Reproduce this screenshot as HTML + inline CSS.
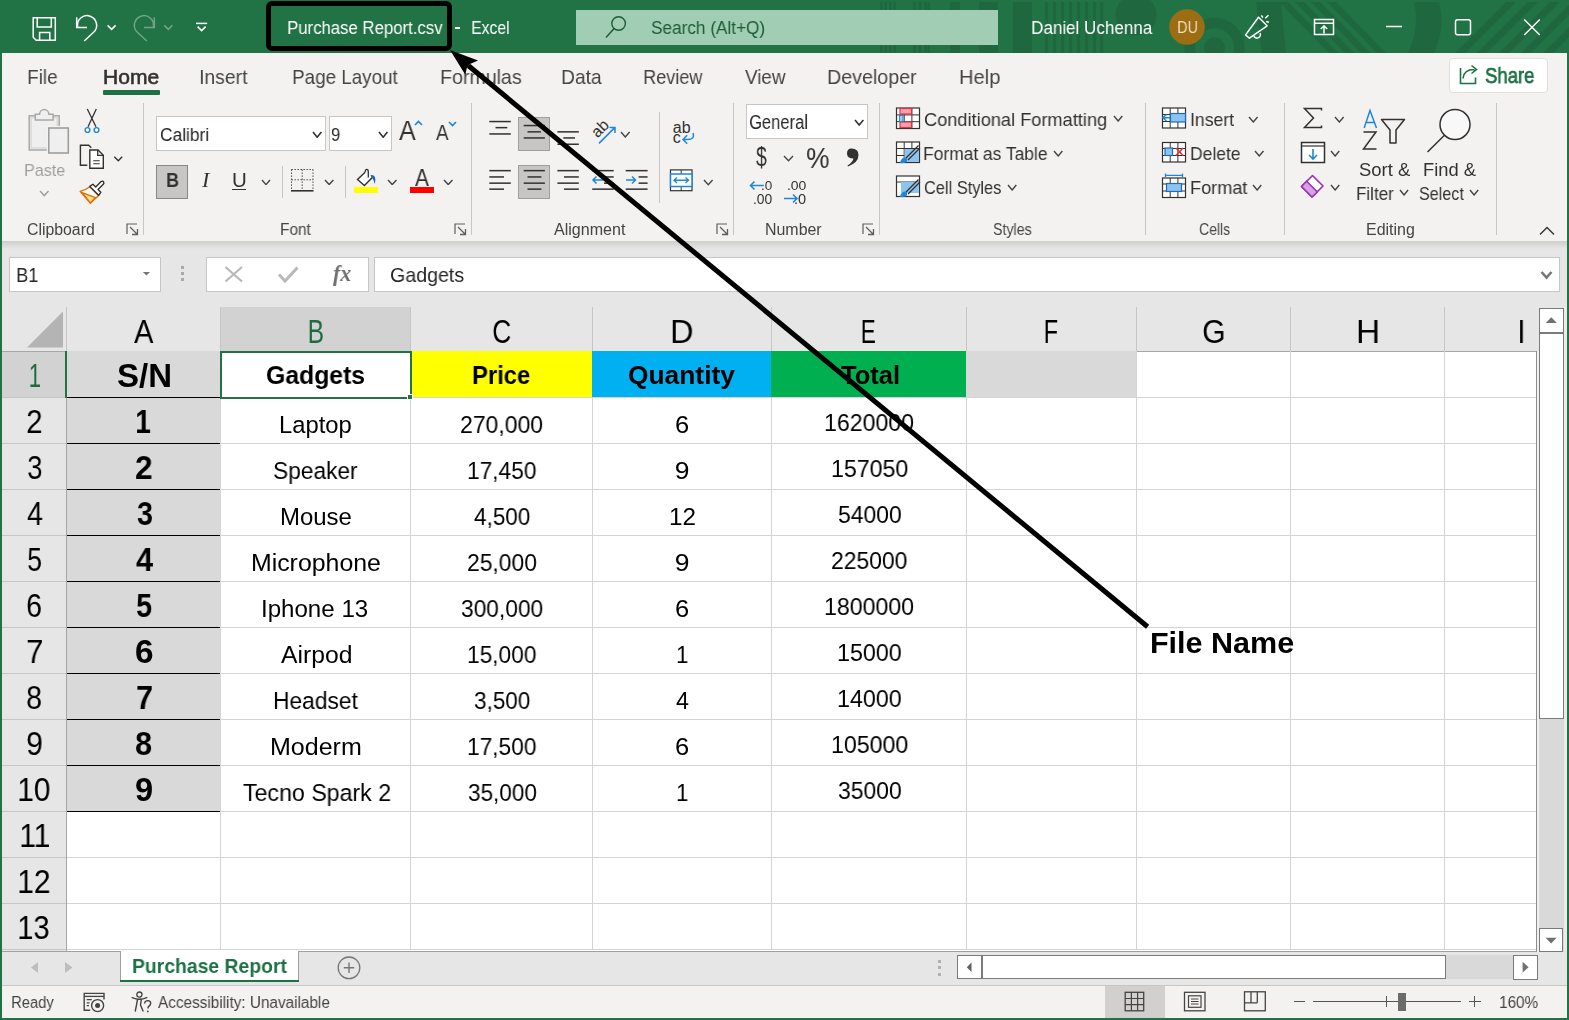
<!DOCTYPE html><html><head><meta charset="utf-8"><style>html,body{margin:0;padding:0;width:1569px;height:1020px;overflow:hidden;background:#217346;}
body{position:relative;font-family:"Liberation Sans",sans-serif;}
.t{position:absolute;white-space:pre;color:#444444;will-change:transform}
.r{position:absolute;display:block}
</style></head><body>
<svg class="r" style="left:0px;top:0px;" width="1569" height="53" viewBox="0 0 1569 53"><g fill="#1e673f"><rect x="880" y="2" width="2.5" height="51"/><rect x="884.5" y="2" width="2.5" height="51"/><rect x="889" y="2" width="2.5" height="51"/><rect x="893.5" y="2" width="2.5" height="51"/><rect x="913" y="2" width="3" height="51"/><rect x="918.5" y="2" width="3" height="51"/><rect x="924" y="2" width="3" height="51"/><rect x="927.5" y="2" width="2.5" height="51"/><rect x="950" y="2" width="10" height="51"/><rect x="979" y="2" width="19" height="51"/><rect x="1013" y="2" width="19" height="51"/><rect x="1045" y="2" width="3.2" height="51"/><rect x="1053" y="2" width="3.2" height="51"/><rect x="1061" y="2" width="3.2" height="51"/><rect x="1069" y="2" width="3.2" height="51"/><rect x="1077" y="2" width="3.2" height="51"/><rect x="1085" y="2" width="3.2" height="51"/><rect x="1093" y="2" width="3.2" height="51"/><rect x="1100" y="2" width="3.2" height="51"/><circle cx="1136" cy="15" r="20.5"/><circle cx="1214.5" cy="47.8" r="24.8" fill="none" stroke="#1e673f" stroke-width="10.5"/><circle cx="1214.5" cy="47.8" r="10.5"/><path d="M1256.4,2 L1280.6,2 L1286,53 L1262,53 Q1258,27 1256.4,2 Z"/><path d="M1279,2 l9,0 l50,51 l-9,0 z"/><path d="M1295,2 l9,0 l50,51 l-9,0 z"/><path d="M1311,2 l9,0 l50,51 l-9,0 z"/><path d="M1327,2 l9,0 l50,51 l-9,0 z"/><path d="M1414,2 L1439,2 Q1446,27 1434,53 L1408,53 Q1420,27 1414,2 z"/><path d="M1455,53 l10,0 l51,-51 l-10,0 z"/><path d="M1477,53 l10,0 l51,-51 l-10,0 z"/><path d="M1499,53 l10,0 l51,-51 l-10,0 z"/><path d="M1521,53 l10,0 l51,-51 l-10,0 z"/><path d="M1543,53 l10,0 l51,-51 l-10,0 z"/></g></svg>
<svg class="r" style="left:0px;top:0px;" width="260" height="53" viewBox="0 0 260 53">
<path d="M33.2,17.7 H55.3 V40.3 H36.2 L33.2,37.3 Z" stroke="#ffffff" stroke-width="1.5" fill="none"/>
<path d="M37.2,17.7 V27 H51.3 V17.7" stroke="#ffffff" stroke-width="1.5" fill="none"/>
<path d="M39.6,40.3 V32.6 H49.8 V40.3" stroke="#ffffff" stroke-width="1.5" fill="none"/>
<path d="M76.7,17.2 V27.5 H87" stroke="#ffffff" stroke-width="1.5" fill="none"/>
<path d="M77.6,27 A9.6,9.6 0 1 1 93.6,32.3 L84.2,41" stroke="#ffffff" stroke-width="1.5" fill="none"/>
<path d="M107.6,25.4 L111.6,29.4 L115.6,25.4" stroke="#ffffff" stroke-width="1.5" fill="none"/>
<g opacity="0.35">
<path d="M154.3,17.2 V27.5 H144" stroke="#ffffff" stroke-width="1.5" fill="none"/>
<path d="M153.4,27 A9.6,9.6 0 1 0 137.4,32.3 L146.8,41" stroke="#ffffff" stroke-width="1.5" fill="none"/>
<path d="M164.3,25.4 L168.3,29.4 L172.3,25.4" stroke="#ffffff" stroke-width="1.5" fill="none"/>
</g>
<path d="M196,23.4 H207.2" stroke="#ffffff" stroke-width="1.5" fill="none"/>
<path d="M197.6,26.6 L201.6,30.6 L205.6,26.6" stroke="#ffffff" stroke-width="1.5" fill="none"/>
</svg>
<div class="r" style="left:455px;top:27.2px;width:5px;height:1.4px;background:#ffffff;"></div>
<div class="r" style="left:576px;top:10px;width:422px;height:35px;background:#a0cdb4;"></div>
<svg class="r" style="left:600px;top:10px;" width="40" height="35" viewBox="0 0 40 35"><circle cx="18.6" cy="13.5" r="6.8" stroke="#1d5c35" stroke-width="1.4" fill="none"/><path d="M14.1,18.5 L6,27.4" stroke="#1d5c35" stroke-width="1.5" fill="none"/></svg>
<svg class="r" style="left:1169px;top:9px;" width="36" height="36" viewBox="0 0 36 36"><circle cx="18" cy="18" r="17.8" fill="#9c6d12"/></svg>
<svg class="r" style="left:1240px;top:10px;" width="320" height="35" viewBox="0 0 320 35">
<path d="M5.6,24.9 L18.5,7.2 L27.1,15.8 L9.4,28.2 Z" stroke="#fff" stroke-width="1.5" fill="none" stroke-linejoin="round"/>
<path d="M13.7,25.3 A3.4,3.4 0 1 0 20,23" stroke="#fff" stroke-width="1.5" fill="none"/>
<path d="M21.4,5.3 L22.8,7.7 M25.2,8.2 L28.5,5.3 M26.2,11.5 L29,12.2" stroke="#fff" stroke-width="1.5" fill="none"/>
<rect x="74.5" y="9.5" width="19" height="15" stroke="#fff" stroke-width="1.5" fill="none"/>
<path d="M74.5,13.2 H93.5 M84,23.5 V15.8 M80.8,19 L84,15.8 L87.2,19" stroke="#fff" stroke-width="1.5" fill="none"/>
<path d="M146,16.5 H162" stroke="#fff" stroke-width="1.5"/>
<rect x="215.5" y="9.7" width="15" height="15" rx="2" stroke="#fff" stroke-width="1.5" fill="none"/>
<path d="M284.2,9.5 L299.8,25 M299.8,9.5 L284.2,25" stroke="#fff" stroke-width="1.5"/>
</svg>
<div class="r" style="left:2px;top:53px;width:1565px;height:188px;background:#f3f2f1;"></div>
<div class="r" style="left:103px;top:90px;width:57px;height:4.6px;background:#1e7145;border-radius:1px;"></div>
<div class="r" style="left:1448.5px;top:57.5px;width:99.5px;height:35.2px;background:#ffffff;box-sizing:border-box;border:1px solid #e1dfdd;border-radius:4px;"></div>
<svg class="r" style="left:1455px;top:62px;" width="30" height="26" viewBox="0 0 30 26"><path d="M5.5,6 V21.5 H20.5 V15.5" stroke="#1e7145" stroke-width="1.6" fill="none"/><path d="M8,16.5 C8.5,10 13,7.5 19.5,7.5 M16.5,3.5 L21.5,7.5 L16.5,11.5" stroke="#1e7145" stroke-width="1.6" fill="none"/></svg>
<div class="r" style="left:143px;top:103px;width:1px;height:132px;background:#c8c6c4;"></div>
<div class="r" style="left:471px;top:103px;width:1px;height:132px;background:#c8c6c4;"></div>
<div class="r" style="left:733px;top:103px;width:1px;height:132px;background:#c8c6c4;"></div>
<div class="r" style="left:879px;top:103px;width:1px;height:132px;background:#c8c6c4;"></div>
<div class="r" style="left:1145px;top:103px;width:1px;height:132px;background:#c8c6c4;"></div>
<div class="r" style="left:1284px;top:103px;width:1px;height:132px;background:#c8c6c4;"></div>
<div class="r" style="left:1496px;top:103px;width:1px;height:132px;background:#c8c6c4;"></div>
<div class="r" style="left:282px;top:166px;width:1px;height:32px;background:#c8c6c4;"></div>
<div class="r" style="left:345px;top:166px;width:1px;height:32px;background:#c8c6c4;"></div>
<div class="r" style="left:659px;top:112px;width:1px;height:91px;background:#c8c6c4;"></div>
<svg class="r" style="left:125.5px;top:222.5px;" width="13" height="13" viewBox="0 0 13 13"><path d="M1,11 V1 H11" stroke="#605e5c" stroke-width="1.2" fill="none"/><path d="M4,4 L11.5,11.5 M6,11.5 H11.5 V6" stroke="#605e5c" stroke-width="1.3" fill="none"/></svg>
<svg class="r" style="left:453.5px;top:222.5px;" width="13" height="13" viewBox="0 0 13 13"><path d="M1,11 V1 H11" stroke="#605e5c" stroke-width="1.2" fill="none"/><path d="M4,4 L11.5,11.5 M6,11.5 H11.5 V6" stroke="#605e5c" stroke-width="1.3" fill="none"/></svg>
<svg class="r" style="left:716px;top:222.5px;" width="13" height="13" viewBox="0 0 13 13"><path d="M1,11 V1 H11" stroke="#605e5c" stroke-width="1.2" fill="none"/><path d="M4,4 L11.5,11.5 M6,11.5 H11.5 V6" stroke="#605e5c" stroke-width="1.3" fill="none"/></svg>
<svg class="r" style="left:862px;top:222.5px;" width="13" height="13" viewBox="0 0 13 13"><path d="M1,11 V1 H11" stroke="#605e5c" stroke-width="1.2" fill="none"/><path d="M4,4 L11.5,11.5 M6,11.5 H11.5 V6" stroke="#605e5c" stroke-width="1.3" fill="none"/></svg>
<svg class="r" style="left:22px;top:104px;" width="52" height="52" viewBox="0 0 52 52">
<rect x="7.2" y="11.8" width="30" height="34.2" fill="#efefef" stroke="#a8a8a8" stroke-width="1.5"/>
<rect x="9.2" y="13.8" width="26" height="30.2" fill="none" stroke="#dadada" stroke-width="1.5"/>
<path d="M13.3,16 V10.2 H17.6 A4.6,4.6 0 0 1 26.8,10.2 H31.1 V16 Z" fill="#efefef" stroke="#a8a8a8" stroke-width="1.5"/>
<rect x="24.8" y="22" width="23.6" height="29.2" fill="#f3f2f1"/>
<rect x="26.8" y="24" width="19.5" height="25" fill="#efefef" stroke="#999999" stroke-width="1.5"/>
</svg>
<svg class="r" style="left:39px;top:190.3px;" width="10.5" height="6.6" viewBox="0 0 10.5 6.6"><path d="M1,1 L5.25,5.6 L9.5,1" stroke="#a19f9d" stroke-width="1.4" fill="none"/></svg>
<svg class="r" style="left:76px;top:104px;" width="50" height="68" viewBox="0 0 50 68">
<path d="M11.3,5 L20,22.7 M20.3,5 L12,22.7" stroke="#323130" stroke-width="1.3" fill="none"/>
<circle cx="11.5" cy="26" r="2.4" stroke="#1e88d8" stroke-width="1.4" fill="#fff"/>
<circle cx="20.5" cy="26" r="2.4" stroke="#1e88d8" stroke-width="1.4" fill="#fff"/>
<path d="M11.3,61.3 H4.4 V41.3 H12.7 L15.3,43.7" stroke="#323130" stroke-width="1.4" fill="none"/>
<path d="M13.8,46 H22 L27.3,51.3 V64.3 H13.8 Z" stroke="#323130" stroke-width="1.4" fill="#ffffff" stroke-linejoin="miter"/>
<path d="M21.7,46 V51.3 H27.3" stroke="#323130" stroke-width="1.3" fill="none"/>
<path d="M17.3,56.8 H23.7 M17.3,59.8 H23.7" stroke="#323130" stroke-width="1.1"/>
<path d="M38.3,52.7 L42.3,56.7 L46.2,52.7" stroke="#323130" stroke-width="1.4" fill="none"/>
</svg>
<svg class="r" style="left:76px;top:176px;" width="32" height="32" viewBox="0 0 32 32">
<path d="M13.8,10.7 Q9,14.5 4.1,15.4 L14.4,27 L22.6,19.5 Z" fill="#ffffff" stroke="#e07000" stroke-width="1.4" stroke-linejoin="round"/>
<path d="M5.6,16.3 L19.5,21.6 L14.4,27 Z" fill="#f8d98a" stroke="#e07000" stroke-width="1.4" stroke-linejoin="round"/>
<path d="M13.8,10.4 L16.9,8.2 L19.7,11 L25.1,5.6 Q26.5,4.5 27.6,6 Q28.3,7.3 27.3,8.3 L22,13.6 L24.8,16.3 L22.6,19.3 Z" fill="#ffffff" stroke="#323130" stroke-width="1.4" stroke-linejoin="round"/>
</svg>
<div class="r" style="left:156px;top:116px;width:170px;height:34.5px;background:#ffffff;box-sizing:border-box;border:1px solid #c8c6c4;"></div>
<div class="r" style="left:328.5px;top:116px;width:63px;height:34.5px;background:#ffffff;box-sizing:border-box;border:1px solid #c8c6c4;"></div>
<svg class="r" style="left:312px;top:130.5px;" width="10.4" height="7.2" viewBox="0 0 10.4 7.2"><path d="M1,1 L5.2,6.2 L9.4,1" stroke="#323130" stroke-width="1.6" fill="none"/></svg>
<svg class="r" style="left:378px;top:130.5px;" width="10.4" height="7.2" viewBox="0 0 10.4 7.2"><path d="M1,1 L5.2,6.2 L9.4,1" stroke="#323130" stroke-width="1.6" fill="none"/></svg>
<svg class="r" style="left:412px;top:118px;" width="12" height="10" viewBox="0 0 12 10"><path d="M3,7 L6.5,3.5 L10,7" stroke="#1e88d8" stroke-width="1.6" fill="none"/></svg>
<svg class="r" style="left:446px;top:118px;" width="12" height="10" viewBox="0 0 12 10"><path d="M3,4 L6.5,7.5 L10,4" stroke="#1e88d8" stroke-width="1.6" fill="none"/></svg>
<div class="r" style="left:156.3px;top:165px;width:31.6px;height:33.7px;background:#c8c6c4;box-sizing:border-box;border:1px solid #8a8886;"></div>
<div class="r" style="left:232px;top:189px;width:14px;height:1.3px;background:#323130;"></div>
<svg class="r" style="left:261px;top:178.8px;" width="10" height="6.6" viewBox="0 0 10 6.6"><path d="M1,1 L5.0,5.6 L9,1" stroke="#444444" stroke-width="1.4" fill="none"/></svg>
<svg class="r" style="left:288px;top:166px;" width="28" height="28" viewBox="0 0 28 28">
<path d="M3.5,3.5 H25 M3.5,3.5 V24 M25,3.5 V24 M14.2,3.5 V24 M3.5,13.8 H25" stroke="#323130" stroke-width="1" stroke-dasharray="1.3,1.7" fill="none"/>
<path d="M3,24.8 H25.5" stroke="#323130" stroke-width="1.6"/>
</svg>
<svg class="r" style="left:324px;top:178.8px;" width="10.4" height="6.6" viewBox="0 0 10.4 6.6"><path d="M1,1 L5.2,5.6 L9.4,1" stroke="#444444" stroke-width="1.4" fill="none"/></svg>
<svg class="r" style="left:350px;top:164px;" width="34" height="32" viewBox="0 0 34 32">
<path d="M15.1,8.3 L7.5,15.4 L14.4,21.6 L22.3,13.5" stroke="#323130" stroke-width="1.4" fill="#ffffff" stroke-linejoin="miter"/>
<path d="M15.1,8.3 Q15.2,5.3 16.8,5.3 Q18.3,5.3 18.3,7.5 V13.6" stroke="#323130" stroke-width="1.3" fill="none"/>
<path d="M20.5,11.2 Q24.8,10.5 25.4,15.5 Q25.3,18 24.4,20 Q24,15.3 21.6,13.5 Z" fill="#1565c0"/>
</svg>
<div class="r" style="left:354px;top:186.7px;width:24px;height:6px;background:#ffff00;"></div>
<svg class="r" style="left:387.3px;top:178.8px;" width="10.5" height="6.6" viewBox="0 0 10.5 6.6"><path d="M1,1 L5.25,5.6 L9.5,1" stroke="#444444" stroke-width="1.4" fill="none"/></svg>
<div class="r" style="left:409.8px;top:186.7px;width:24.2px;height:6px;background:#ff0000;"></div>
<svg class="r" style="left:443px;top:178.8px;" width="10.5" height="6.6" viewBox="0 0 10.5 6.6"><path d="M1,1 L5.25,5.6 L9.5,1" stroke="#444444" stroke-width="1.4" fill="none"/></svg>
<div class="r" style="left:518.2px;top:117.2px;width:31.6px;height:33.6px;background:#c8c6c4;box-sizing:border-box;border:1px solid #a19f9d;"></div>
<div class="r" style="left:518.2px;top:165px;width:31.6px;height:33.6px;background:#c8c6c4;box-sizing:border-box;border:1px solid #a19f9d;"></div>
<svg class="r" style="left:480px;top:0px;" width="240" height="210" viewBox="0 0 240 210"><rect x="9.300000000000011" y="120.8" width="21.5" height="1.5" fill="#323130"/><rect x="15.5" y="126.89999999999999" width="11.800000000000011" height="1.5" fill="#323130"/><rect x="9.300000000000011" y="133.20000000000002" width="21.5" height="1.5" fill="#323130"/><rect x="43.700000000000045" y="124.8" width="21.199999999999932" height="1.5" fill="#323130"/><rect x="47.5" y="131.10000000000002" width="13.399999999999977" height="1.5" fill="#323130"/><rect x="43.700000000000045" y="137.20000000000002" width="21.199999999999932" height="1.5" fill="#323130"/><rect x="77.39999999999998" y="131.10000000000002" width="21.399999999999977" height="1.5" fill="#323130"/><rect x="83.29999999999995" y="137.20000000000002" width="11.700000000000045" height="1.5" fill="#323130"/><rect x="77.39999999999998" y="143.5" width="21.399999999999977" height="1.5" fill="#323130"/><rect x="9.300000000000011" y="169.9" width="21.5" height="1.5" fill="#323130"/><rect x="9.300000000000011" y="176.20000000000002" width="14.699999999999989" height="1.5" fill="#323130"/><rect x="9.300000000000011" y="182.4" width="21.5" height="1.5" fill="#323130"/><rect x="9.300000000000011" y="188.4" width="14.699999999999989" height="1.5" fill="#323130"/><rect x="43.700000000000045" y="169.9" width="21.199999999999932" height="1.5" fill="#323130"/><rect x="47.5" y="176.20000000000002" width="13.899999999999977" height="1.5" fill="#323130"/><rect x="43.700000000000045" y="182.4" width="21.199999999999932" height="1.5" fill="#323130"/><rect x="47.5" y="188.4" width="13.899999999999977" height="1.5" fill="#323130"/><rect x="77.39999999999998" y="169.9" width="21.399999999999977" height="1.5" fill="#323130"/><rect x="84" y="176.20000000000002" width="14.799999999999955" height="1.5" fill="#323130"/><rect x="77.39999999999998" y="182.4" width="21.399999999999977" height="1.5" fill="#323130"/><rect x="84" y="188.4" width="14.799999999999955" height="1.5" fill="#323130"/><rect x="112.20000000000005" y="169.9" width="21.5" height="1.5" fill="#323130"/><rect x="124" y="176.20000000000002" width="9.700000000000045" height="1.5" fill="#323130"/><rect x="124" y="182.4" width="9.700000000000045" height="1.5" fill="#323130"/><rect x="112.20000000000005" y="188.4" width="21.5" height="1.5" fill="#323130"/><rect x="145.70000000000005" y="169.9" width="21.899999999999977" height="1.5" fill="#323130"/><rect x="158.60000000000002" y="176.20000000000002" width="9.0" height="1.5" fill="#323130"/><rect x="158.60000000000002" y="182.4" width="9.0" height="1.5" fill="#323130"/><rect x="145.70000000000005" y="188.4" width="21.899999999999977" height="1.5" fill="#323130"/><path d="M112.5,180 H123 M116.5,176.5 L113,180 L116.5,183.5" stroke="#1e88d8" stroke-width="1.5" fill="none" transform="translate(0,0)"/><path d="M146,180 H155.5 M152,176.5 L155.5,180 L152,183.5" stroke="#1e88d8" stroke-width="1.5" fill="none"/><text x="0" y="0" font-family="Liberation Sans" font-size="16" fill="#323130" transform="translate(117.5,138.5) rotate(-45)">ab</text><path d="M119,143.4 L135,127.4 M129.5,127.4 H135 V133" stroke="#1e88d8" stroke-width="1.5" fill="none"/><text x="192.8" y="132.6" font-family="Liberation Sans" font-size="16" fill="#323130">ab</text><text x="192.8" y="143.4" font-family="Liberation Sans" font-size="16" fill="#323130">c</text><path d="M213,133 Q215.2,139.5 207.4,139.5 H203.2 M207.2,135.3 L203,139.5 L207.2,143.8" stroke="#1e88d8" stroke-width="1.5" fill="none"/><rect x="190.5" y="169.9" width="21.5" height="20.8" stroke="#323130" stroke-width="1.2" fill="#fff"/><path d="M201.2,170 V191" stroke="#323130" stroke-width="1"/><rect x="190.5" y="174" width="21.5" height="12.5" stroke="#1e88d8" stroke-width="1.5" fill="#fff"/><path d="M194,180.2 H208.5 M197,177.5 L194,180.2 L197,183 M205.5,177.5 L208.5,180.2 L205.5,183" stroke="#1e88d8" stroke-width="1.4" fill="none"/></svg>
<svg class="r" style="left:620px;top:131px;" width="10.6" height="7" viewBox="0 0 10.6 7"><path d="M1,1 L5.3,6 L9.6,1" stroke="#444444" stroke-width="1.4" fill="none"/></svg>
<svg class="r" style="left:703px;top:179px;" width="10.6" height="6.8" viewBox="0 0 10.6 6.8"><path d="M1,1 L5.3,5.8 L9.6,1" stroke="#444444" stroke-width="1.4" fill="none"/></svg>
<div class="r" style="left:746.2px;top:104.4px;width:121.8px;height:34.4px;background:#ffffff;box-sizing:border-box;border:1px solid #c8c6c4;"></div>
<svg class="r" style="left:854px;top:119px;" width="10.4" height="7" viewBox="0 0 10.4 7"><path d="M1,1 L5.2,6 L9.4,1" stroke="#323130" stroke-width="1.6" fill="none"/></svg>
<svg class="r" style="left:783px;top:155px;" width="11" height="6.7" viewBox="0 0 11 6.7"><path d="M1,1 L5.5,5.7 L10,1" stroke="#444444" stroke-width="1.4" fill="none"/></svg>
<svg class="r" style="left:844px;top:145px;" width="18" height="25" viewBox="0 0 18 25"><path d="M7.5,3.5 Q14.5,3.5 14.5,10 Q14.5,17.5 4,21.5 L3.5,20.5 Q8.5,17.5 9.5,13.5 Q3,13.5 3,8.5 Q3,3.5 7.5,3.5 Z" fill="#323130"/></svg>
<svg class="r" style="left:745px;top:175px;" width="60" height="35" viewBox="0 0 60 35"><path d="M5.5,10.5 H18.8 M9.5,6.5 L5.5,10.5 L9.5,14.5" stroke="#1e88d8" stroke-width="1.6" fill="none"/><path d="M39,23.5 H52 M48,19.5 L52,23.5 L48,27.5" stroke="#1e88d8" stroke-width="1.6" fill="none"/></svg>
<svg class="r" style="left:894px;top:105px;" width="30" height="95" viewBox="0 0 30 95">
<rect x="2.5" y="3" width="23" height="20.5" fill="#fff" stroke="#323130" stroke-width="1.2"/>
<path d="M2.5,9.9 H25.5 M2.5,16.7 H25.5 M10.2,3 V23.5 M17.9,3 V23.5" stroke="#323130" stroke-width="1"/>
<rect x="6" y="3.5" width="11.5" height="5.5" fill="#f4a3b0" stroke="#e8323c" stroke-width="1.2"/>
<rect x="6" y="17" width="11.5" height="5.5" fill="#f4a3b0" stroke="#e8323c" stroke-width="1.2"/>
<rect x="5.5" y="10.5" width="3.5" height="6" fill="#9fd0f3" stroke="#1e88d8" stroke-width="1"/>
<rect x="2.5" y="37" width="23" height="20.5" fill="#fff" stroke="#323130" stroke-width="1.2"/>
<path d="M2.5,43.5 H25.5 M2.5,50.5 H25.5 M10.2,37 V57.5 M17.9,37 V57.5" stroke="#323130" stroke-width="1"/>
<path d="M10.5,44 H25 V57 H10.5 Z" fill="#8cc3ef"/>
<path d="M24.5,40.5 L12,53 M26,43 L14,55" stroke="#323130" stroke-width="1.3"/>
<path d="M6,58 Q7,52 12,52.5 Q14,54.5 12.5,57 Q10,58.5 6,58 Z" fill="#1e88d8"/>
<rect x="2.5" y="71" width="23" height="20.5" fill="#fff" stroke="#323130" stroke-width="1.2"/>
<path d="M2.5,77 H25.5" stroke="#323130" stroke-width="1"/>
<path d="M7,77 H25 V88 L7,88 Z" fill="#8cc3ef"/>
<path d="M24.5,74.5 L12,87 M26,77 L14,89" stroke="#323130" stroke-width="1.3"/>
<path d="M6,92 Q7,86 12,86.5 Q14,88.5 12.5,91 Q10,92.5 6,92 Z" fill="#1e88d8"/>
</svg>
<svg class="r" style="left:1113px;top:115px;" width="10.3" height="7" viewBox="0 0 10.3 7"><path d="M1,1 L5.15,6 L9.3,1" stroke="#444444" stroke-width="1.4" fill="none"/></svg>
<svg class="r" style="left:1053px;top:149.5px;" width="10.4" height="7" viewBox="0 0 10.4 7"><path d="M1,1 L5.2,6 L9.4,1" stroke="#444444" stroke-width="1.4" fill="none"/></svg>
<svg class="r" style="left:1007px;top:183.5px;" width="10.3" height="7" viewBox="0 0 10.3 7"><path d="M1,1 L5.15,6 L9.3,1" stroke="#444444" stroke-width="1.4" fill="none"/></svg>
<svg class="r" style="left:1160px;top:105px;" width="30" height="95" viewBox="0 0 30 95">
<rect x="2.5" y="3" width="23" height="20" fill="#fff" stroke="#323130" stroke-width="1.2"/>
<path d="M2.5,9.5 H25.5 M2.5,16.5 H25.5 M10.2,3 V23 M17.9,3 V23" stroke="#323130" stroke-width="1"/>
<rect x="10.5" y="8.5" width="15" height="8.5" fill="#8cc3ef" stroke="#1e6bb8" stroke-width="1.2"/>
<path d="M3,12.8 H10 M6.5,9.5 L3,12.8 L6.5,16" stroke="#1e88d8" stroke-width="1.5" fill="none"/>
<rect x="2.5" y="37.5" width="23" height="19.5" fill="#fff" stroke="#323130" stroke-width="1.2"/>
<path d="M2.5,43.5 H25.5 M2.5,50.5 H25.5 M10.2,37.5 V57 M17.9,37.5 V57" stroke="#323130" stroke-width="1"/>
<rect x="5" y="43" width="7.5" height="7.5" fill="#8cc3ef" stroke="#1e6bb8" stroke-width="1.2"/>
<path d="M16,43 L23,50.5 M23,43 L16,50.5" stroke="#e8323c" stroke-width="1.6"/>
<rect x="2.5" y="73" width="23" height="19.5" fill="#fff" stroke="#323130" stroke-width="1.2"/>
<path d="M2.5,79 H25.5 M2.5,86 H25.5 M10.2,73 V92.5 M17.9,73 V92.5" stroke="#323130" stroke-width="1"/>
<rect x="6.5" y="78.5" width="15" height="8" fill="#8cc3ef" stroke="#1e6bb8" stroke-width="1.2"/>
<path d="M5.5,70.3 H22.5 M5.5,68.5 V72 M22.5,68.5 V72" stroke="#1e88d8" stroke-width="1.3"/>
</svg>
<svg class="r" style="left:1248px;top:116px;" width="10.6" height="7" viewBox="0 0 10.6 7"><path d="M1,1 L5.3,6 L9.6,1" stroke="#444444" stroke-width="1.4" fill="none"/></svg>
<svg class="r" style="left:1254px;top:150px;" width="10.5" height="7" viewBox="0 0 10.5 7"><path d="M1,1 L5.25,6 L9.5,1" stroke="#444444" stroke-width="1.4" fill="none"/></svg>
<svg class="r" style="left:1252px;top:184px;" width="10.3" height="7" viewBox="0 0 10.3 7"><path d="M1,1 L5.15,6 L9.3,1" stroke="#444444" stroke-width="1.4" fill="none"/></svg>
<svg class="r" style="left:1298px;top:104px;" width="32" height="96" viewBox="0 0 32 96">
<path d="M23.5,6.5 V4.5 H6.5 L15.5,14 L6.5,23.5 H23.5 V21.5" stroke="#323130" stroke-width="1.5" fill="none"/>
<rect x="3.5" y="38.5" width="23" height="20" fill="#fff" stroke="#323130" stroke-width="1.5"/>
<path d="M3.5,42 H26.5" stroke="#323130" stroke-width="1.2"/>
<path d="M15,45 V55 M11,51 L15,55 L19,51" stroke="#1e88d8" stroke-width="1.6" fill="none"/>
<path d="M14.5,71.5 L25,82 L14,93 L3.5,82.5 Z" fill="#fff" stroke="#9b30b5" stroke-width="1.6" stroke-linejoin="round"/>
<path d="M8.6,77.2 L19.4,88 L14,93 L3.5,82.5 Z" fill="#d9a0e4" stroke="#9b30b5" stroke-width="1.6" stroke-linejoin="round"/>
</svg>
<svg class="r" style="left:1334px;top:116px;" width="10.7" height="7" viewBox="0 0 10.7 7"><path d="M1,1 L5.35,6 L9.7,1" stroke="#444444" stroke-width="1.4" fill="none"/></svg>
<svg class="r" style="left:1330px;top:150px;" width="10.3" height="7" viewBox="0 0 10.3 7"><path d="M1,1 L5.15,6 L9.3,1" stroke="#444444" stroke-width="1.4" fill="none"/></svg>
<svg class="r" style="left:1330px;top:184px;" width="10.3" height="7" viewBox="0 0 10.3 7"><path d="M1,1 L5.15,6 L9.3,1" stroke="#444444" stroke-width="1.4" fill="none"/></svg>
<svg class="r" style="left:1355px;top:104px;" width="120" height="55" viewBox="0 0 120 55">
<path d="M9.2,24 L15,6.5 L21.5,24 M11,18.5 H19.8" stroke="#1e88d8" stroke-width="1.5" fill="none"/>
<path d="M8.5,28 H21 L8.5,45 H21.5" stroke="#323130" stroke-width="1.5" fill="none"/>
<path d="M26.5,15.5 H49.5 L41,26 V39 H35 V26 Z" stroke="#323130" stroke-width="1.5" fill="#f3f2f1" stroke-linejoin="round"/>
<circle cx="100" cy="20.5" r="15" stroke="#323130" stroke-width="1.5" fill="#f8f8f8"/>
<path d="M89.2,31.5 L72.5,48" stroke="#323130" stroke-width="1.5"/>
</svg>
<svg class="r" style="left:1399.3px;top:189.3px;" width="10.1" height="7" viewBox="0 0 10.1 7"><path d="M1,1 L5.05,6 L9.1,1" stroke="#444444" stroke-width="1.4" fill="none"/></svg>
<svg class="r" style="left:1469px;top:189.3px;" width="10.2" height="7" viewBox="0 0 10.2 7"><path d="M1,1 L5.1,6 L9.2,1" stroke="#444444" stroke-width="1.4" fill="none"/></svg>
<svg class="r" style="left:1538px;top:225px;" width="18" height="12" viewBox="0 0 18 12"><path d="M2,9.5 L9,2.5 L16,9.5" stroke="#323130" stroke-width="1.4" fill="none"/></svg>
<div class="r" style="left:2px;top:241px;width:1565px;height:66px;background:#e6e6e6;"></div>
<div class="r" style="left:2px;top:241px;width:1565px;height:8px;background:linear-gradient(#cfcecd,#e6e6e6);"></div>
<div class="r" style="left:9.4px;top:257px;width:151.3px;height:34.5px;background:#ffffff;box-sizing:border-box;border:1px solid #c6c6c6;"></div>
<svg class="r" style="left:140px;top:270px;" width="14" height="8" viewBox="0 0 14 8"><path d="M2.8,2 H10 L6.4,5.6 Z" fill="#767676"/></svg>
<div class="r" style="left:181px;top:266px;width:3px;height:3px;background:#a8a8a8;"></div>
<div class="r" style="left:181px;top:272px;width:3px;height:3px;background:#a8a8a8;"></div>
<div class="r" style="left:181px;top:278px;width:3px;height:3px;background:#a8a8a8;"></div>
<div class="r" style="left:206px;top:257px;width:163.4px;height:34.5px;background:#ffffff;box-sizing:border-box;border:1px solid #c6c6c6;"></div>
<svg class="r" style="left:220px;top:262px;" width="140" height="26" viewBox="0 0 140 26">
<path d="M5.5,5 L22,19.5 M22,5 L5.5,19.5" stroke="#b8b8b8" stroke-width="2.2"/>
<path d="M59,12.5 L65,19 L77.5,5.5" stroke="#b8b8b8" stroke-width="3" fill="none"/>
</svg>
<div class="r" style="left:374.4px;top:257px;width:1185.6px;height:34.5px;background:#ffffff;box-sizing:border-box;border:1px solid #c6c6c6;"></div>
<svg class="r" style="left:1538px;top:268px;" width="18" height="14" viewBox="0 0 18 14"><path d="M3.5,4 L8.5,9.5 L13.5,4" stroke="#767676" stroke-width="2.6" fill="none"/></svg>
<div class="r" style="left:2px;top:307px;width:1535px;height:44px;background:#e6e6e6;"></div>
<div class="r" style="left:2px;top:351px;width:64px;height:599px;background:#e6e6e6;"></div>
<div class="r" style="left:67px;top:351px;width:1470px;height:599px;background:#ffffff;"></div>
<div class="r" style="left:221px;top:307px;width:189px;height:44px;background:#d2d2d2;"></div>
<div class="r" style="left:2px;top:352px;width:64px;height:45px;background:#d2d2d2;"></div>
<svg class="r" style="left:2px;top:307px;" width="64" height="44" viewBox="0 0 64 44"><path d="M61,4.5 V40.5 H25 Z" fill="#b4b4b4"/></svg>
<div class="r" style="left:220px;top:307px;width:1px;height:44px;background:#c6c6c6;"></div>
<div class="r" style="left:410px;top:307px;width:1px;height:44px;background:#c6c6c6;"></div>
<div class="r" style="left:592px;top:307px;width:1px;height:44px;background:#c6c6c6;"></div>
<div class="r" style="left:771px;top:307px;width:1px;height:44px;background:#c6c6c6;"></div>
<div class="r" style="left:966px;top:307px;width:1px;height:44px;background:#c6c6c6;"></div>
<div class="r" style="left:1136px;top:307px;width:1px;height:44px;background:#c6c6c6;"></div>
<div class="r" style="left:1290px;top:307px;width:1px;height:44px;background:#c6c6c6;"></div>
<div class="r" style="left:1444px;top:307px;width:1px;height:44px;background:#c6c6c6;"></div>
<div class="r" style="left:66px;top:307px;width:1px;height:44px;background:#c6c6c6;"></div>
<div class="r" style="left:2px;top:350.5px;width:1535px;height:1px;background:#a6a6a6;"></div>
<div class="r" style="left:2px;top:397px;width:64px;height:1px;background:#c6c6c6;"></div>
<div class="r" style="left:2px;top:443px;width:64px;height:1px;background:#c6c6c6;"></div>
<div class="r" style="left:2px;top:489px;width:64px;height:1px;background:#c6c6c6;"></div>
<div class="r" style="left:2px;top:535px;width:64px;height:1px;background:#c6c6c6;"></div>
<div class="r" style="left:2px;top:581px;width:64px;height:1px;background:#c6c6c6;"></div>
<div class="r" style="left:2px;top:627px;width:64px;height:1px;background:#c6c6c6;"></div>
<div class="r" style="left:2px;top:673px;width:64px;height:1px;background:#c6c6c6;"></div>
<div class="r" style="left:2px;top:719px;width:64px;height:1px;background:#c6c6c6;"></div>
<div class="r" style="left:2px;top:765px;width:64px;height:1px;background:#c6c6c6;"></div>
<div class="r" style="left:2px;top:811px;width:64px;height:1px;background:#c6c6c6;"></div>
<div class="r" style="left:2px;top:857px;width:64px;height:1px;background:#c6c6c6;"></div>
<div class="r" style="left:2px;top:903px;width:64px;height:1px;background:#c6c6c6;"></div>
<div class="r" style="left:2px;top:949px;width:64px;height:1px;background:#c6c6c6;"></div>
<div class="r" style="left:66px;top:351px;width:1px;height:599px;background:#a6a6a6;"></div>
<div class="r" style="left:67px;top:397px;width:1470px;height:1px;background:#d4d4d4;"></div>
<div class="r" style="left:67px;top:443px;width:1470px;height:1px;background:#d4d4d4;"></div>
<div class="r" style="left:67px;top:489px;width:1470px;height:1px;background:#d4d4d4;"></div>
<div class="r" style="left:67px;top:535px;width:1470px;height:1px;background:#d4d4d4;"></div>
<div class="r" style="left:67px;top:581px;width:1470px;height:1px;background:#d4d4d4;"></div>
<div class="r" style="left:67px;top:627px;width:1470px;height:1px;background:#d4d4d4;"></div>
<div class="r" style="left:67px;top:673px;width:1470px;height:1px;background:#d4d4d4;"></div>
<div class="r" style="left:67px;top:719px;width:1470px;height:1px;background:#d4d4d4;"></div>
<div class="r" style="left:67px;top:765px;width:1470px;height:1px;background:#d4d4d4;"></div>
<div class="r" style="left:67px;top:811px;width:1470px;height:1px;background:#d4d4d4;"></div>
<div class="r" style="left:67px;top:857px;width:1470px;height:1px;background:#d4d4d4;"></div>
<div class="r" style="left:67px;top:903px;width:1470px;height:1px;background:#d4d4d4;"></div>
<div class="r" style="left:220px;top:351px;width:1px;height:599px;background:#d4d4d4;"></div>
<div class="r" style="left:410px;top:351px;width:1px;height:599px;background:#d4d4d4;"></div>
<div class="r" style="left:592px;top:351px;width:1px;height:599px;background:#d4d4d4;"></div>
<div class="r" style="left:771px;top:351px;width:1px;height:599px;background:#d4d4d4;"></div>
<div class="r" style="left:966px;top:351px;width:1px;height:599px;background:#d4d4d4;"></div>
<div class="r" style="left:1136px;top:351px;width:1px;height:599px;background:#d4d4d4;"></div>
<div class="r" style="left:1290px;top:351px;width:1px;height:599px;background:#d4d4d4;"></div>
<div class="r" style="left:1444px;top:351px;width:1px;height:599px;background:#d4d4d4;"></div>
<div class="r" style="left:67px;top:351px;width:153px;height:460px;background:#d9d9d9;"></div>
<div class="r" style="left:67px;top:396.5px;width:153px;height:1.5px;background:#000000;"></div>
<div class="r" style="left:67px;top:442.5px;width:153px;height:1.5px;background:#000000;"></div>
<div class="r" style="left:67px;top:488.5px;width:153px;height:1.5px;background:#000000;"></div>
<div class="r" style="left:67px;top:534.5px;width:153px;height:1.5px;background:#000000;"></div>
<div class="r" style="left:67px;top:580.5px;width:153px;height:1.5px;background:#000000;"></div>
<div class="r" style="left:67px;top:626.5px;width:153px;height:1.5px;background:#000000;"></div>
<div class="r" style="left:67px;top:672.5px;width:153px;height:1.5px;background:#000000;"></div>
<div class="r" style="left:67px;top:718.5px;width:153px;height:1.5px;background:#000000;"></div>
<div class="r" style="left:67px;top:764.5px;width:153px;height:1.5px;background:#000000;"></div>
<div class="r" style="left:67px;top:810.5px;width:153px;height:1.5px;background:#000000;"></div>
<div class="r" style="left:410px;top:351px;width:182px;height:46px;background:#ffff00;"></div>
<div class="r" style="left:592px;top:351px;width:179px;height:46px;background:#00b0f0;"></div>
<div class="r" style="left:771px;top:351px;width:195px;height:46px;background:#00b050;"></div>
<div class="r" style="left:966px;top:351px;width:170px;height:46px;background:#d9d9d9;"></div>
<div class="r" style="left:219.5px;top:350.5px;width:192px;height:48px;box-sizing:border-box;border:2px solid #217346;"></div>
<div class="r" style="left:65px;top:351px;width:2px;height:47px;background:#217346;"></div>
<div class="r" style="left:407px;top:394.2px;width:6px;height:6px;background:#217346;box-sizing:border-box;border:1px solid #fff;"></div>
<div class="r" style="left:1536px;top:351px;width:1px;height:599px;background:#8c8c8c;"></div>
<div class="r" style="left:1537px;top:307px;width:30px;height:643px;background:#e6e6e6;"></div>
<div class="r" style="left:1537px;top:351px;width:2px;height:599px;background:#f0f0f0;"></div>
<div class="r" style="left:1539px;top:308px;width:25px;height:642px;background:#d9d9d9;"></div>
<div class="r" style="left:1564px;top:307px;width:3px;height:643px;background:#ebebeb;"></div>
<div class="r" style="left:1539px;top:308px;width:24.6px;height:24.6px;background:#ffffff;box-sizing:border-box;border:1px solid #7a7a7a;"></div>
<svg class="r" style="left:1539px;top:308px;" width="25" height="25" viewBox="0 0 25 25"><path d="M6.8,15 H17.8 L12.3,9.2 Z" fill="#707070"/></svg>
<div class="r" style="left:1539px;top:333px;width:25px;height:386px;background:#ffffff;box-sizing:border-box;border:1px solid #7a7a7a;"></div>
<div class="r" style="left:2px;top:950px;width:1565px;height:35px;background:#e6e6e6;"></div>
<div class="r" style="left:67px;top:949px;width:1470px;height:1px;background:#d4d4d4;"></div>
<div class="r" style="left:2px;top:949px;width:64px;height:1px;background:#c6c6c6;"></div>
<div class="r" style="left:66px;top:949px;width:1px;height:2px;background:#a6a6a6;"></div>
<div class="r" style="left:2px;top:950px;width:64px;height:1.5px;background:#e6e6e6;"></div>
<div class="r" style="left:67px;top:950px;width:1470px;height:1.5px;background:#ffffff;"></div>
<div class="r" style="left:2px;top:951.3px;width:1535px;height:1px;background:#a0a0a0;"></div>
<div class="r" style="left:1536px;top:949px;width:1px;height:3px;background:#8c8c8c;"></div>
<div class="r" style="left:1537px;top:949px;width:2px;height:3px;background:#f0f0f0;"></div>
<div class="r" style="left:1539px;top:949px;width:25px;height:3px;background:#d9d9d9;"></div>
<div class="r" style="left:1539.3px;top:928.2px;width:24.2px;height:24.3px;background:#ffffff;box-sizing:border-box;border:1px solid #7a7a7a;"></div>
<svg class="r" style="left:1539.3px;top:928.2px;" width="25" height="25" viewBox="0 0 25 25"><path d="M6.6,9.8 H17.6 L12.1,15.6 Z" fill="#707070"/></svg>
<svg class="r" style="left:25px;top:958px;" width="55" height="20" viewBox="0 0 55 20"><path d="M13,4 L6,9.5 L13,15 Z" fill="#bdbdbd"/><path d="M40,4 L47.5,9.5 L40,15 Z" fill="#bdbdbd"/></svg>
<div class="r" style="left:120px;top:951.3px;width:179px;height:30.5px;background:#ffffff;box-sizing:border-box;border-left:1px solid #a0a0a0;border-right:1px solid #a0a0a0;"></div>
<div class="r" style="left:120px;top:979.8px;width:179px;height:2.2px;background:#1e7145;"></div>
<svg class="r" style="left:335px;top:955px;" width="28" height="26" viewBox="0 0 28 26"><circle cx="14" cy="12.8" r="10.8" stroke="#767676" stroke-width="1.3" fill="none"/><path d="M14,7.5 V18 M8.8,12.8 H19.2" stroke="#767676" stroke-width="1.4"/></svg>
<div class="r" style="left:937.5px;top:959.5px;width:3px;height:3px;background:#b0b0b0;"></div>
<div class="r" style="left:937.5px;top:966px;width:3px;height:3px;background:#b0b0b0;"></div>
<div class="r" style="left:937.5px;top:972.5px;width:3px;height:3px;background:#b0b0b0;"></div>
<div class="r" style="left:957.2px;top:955px;width:580.4px;height:24.4px;background:#d9d9d9;"></div>
<div class="r" style="left:957.2px;top:955px;width:25px;height:24.4px;background:#ffffff;box-sizing:border-box;border:1px solid #7a7a7a;"></div>
<svg class="r" style="left:957.2px;top:955px;" width="25" height="25" viewBox="0 0 25 25"><path d="M14.5,7.5 V17 L9.8,12.2 Z" fill="#606060"/></svg>
<div class="r" style="left:981.5px;top:955px;width:464px;height:24.4px;background:#ffffff;box-sizing:border-box;border:1px solid #7a7a7a;"></div>
<div class="r" style="left:1513.4px;top:955.3px;width:24.2px;height:24.4px;background:#ffffff;box-sizing:border-box;border:1px solid #7a7a7a;"></div>
<svg class="r" style="left:1513.4px;top:955.3px;" width="25" height="25" viewBox="0 0 25 25"><path d="M9.6,6.8 V17.6 L15.6,12.2 Z" fill="#707070"/></svg>
<div class="r" style="left:2px;top:985px;width:1565px;height:33px;background:#f3f2f1;"></div>
<div class="r" style="left:2px;top:985px;width:1565px;height:1px;background:#c8c6c4;"></div>
<svg class="r" style="left:78px;top:988px;" width="80" height="28" viewBox="0 0 80 28">
<path d="M12.2,22.3 H6.2 V5.4 H26 V11.5" stroke="#444" stroke-width="1.4" fill="none"/>
<path d="M6.2,8.4 H26" stroke="#444" stroke-width="1.3"/>
<path d="M8.7,11.7 H13.8 M8.7,14.8 H11.5 M8.7,17.6 H11" stroke="#444" stroke-width="1.3"/>
<circle cx="19.6" cy="17.6" r="6" stroke="#444" stroke-width="1.4" fill="#f3f2f1"/>
<circle cx="19.6" cy="17.6" r="2.5" fill="#444"/>
<circle cx="61.4" cy="6.6" r="2.6" stroke="#444" stroke-width="1.3" fill="none"/>
<g fill="none" stroke-linecap="round" stroke-linejoin="round">
<path d="M54.2,9.6 Q58,11.2 61.4,11.2 Q65,11.2 68.8,9.6 M59.5,11.5 L58.5,17 L57.3,23 M63.3,11.5 L62.5,17 L65,23" stroke="#444" stroke-width="1.4"/>
</g>
<path d="M66.5,15.5 Q66.8,12.6 69.8,12.6 Q72.8,12.8 72.7,15.4 Q72.5,17.3 70.4,18.6 L69.8,20.5" stroke="#444" stroke-width="1.4" fill="none"/>
<circle cx="69.8" cy="23.4" r="0.9" fill="#444"/>
</svg>
<div class="r" style="left:1105px;top:985.6px;width:60px;height:32.4px;background:#d2d0ce;"></div>
<svg class="r" style="left:1120px;top:989px;" width="160" height="25" viewBox="0 0 160 25">
<rect x="5.2" y="3.3" width="18.5" height="18.5" stroke="#444" stroke-width="1.3" fill="none"/>
<path d="M11.4,3.3 V21.8 M17.6,3.3 V21.8 M5.2,9.5 H23.7 M5.2,15.7 H23.7" stroke="#444" stroke-width="1.2"/>
<rect x="64.5" y="3.3" width="20.5" height="18.5" stroke="#444" stroke-width="1.3" fill="none"/>
<rect x="68.5" y="6.8" width="12.5" height="11.5" stroke="#444" stroke-width="1.2" fill="none"/>
<path d="M71,10 H78.5 M71,12.5 H78.5 M71,15 H78.5" stroke="#444" stroke-width="1"/>
<rect x="124.5" y="2.8" width="20.8" height="19" stroke="#444" stroke-width="1.3" fill="none"/><path d="M131,2.8 V13.8 M137.3,2.8 V13.8 M124.5,13.8 H137.3" stroke="#444" stroke-width="1.3" fill="none"/>
</svg>
<div class="r" style="left:1293.5px;top:1000.6px;width:11.2px;height:1.3px;background:#555;"></div>
<div class="r" style="left:1313px;top:1000.6px;width:147.6px;height:1.4px;background:#555;"></div>
<div class="r" style="left:1386px;top:995.5px;width:1.4px;height:11px;background:#555;"></div>
<div class="r" style="left:1397.7px;top:993px;width:8.3px;height:18px;background:#6b6b6b;"></div>
<div class="r" style="left:1469px;top:1000.6px;width:11.6px;height:1.3px;background:#555;"></div>
<div class="r" style="left:1474.1px;top:995.5px;width:1.3px;height:11.6px;background:#555;"></div>
<div class="r" style="left:0px;top:1018px;width:1569px;height:2px;background:#217346;"></div>
<div class="t" style="left:287.20px;top:19px;font-size:18.9px;line-height:18.9px;color:#ffffff;transform:scaleX(0.8863);transform-origin:1.00px 0;">Purchase Report.csv</div>
<div class="t" style="left:471.00px;top:19px;font-size:18.9px;line-height:18.9px;color:#ffffff;transform:scaleX(0.8319);transform-origin:1.00px 0;">Excel</div>
<div class="t" style="left:650.50px;top:18px;font-size:19.19px;line-height:19.19px;color:#1d5c35;transform:scaleX(0.8958);transform-origin:0.00px 0;">Search (Alt+Q)</div>
<div class="t" style="left:1030.80px;top:19px;font-size:18.9px;line-height:18.9px;color:#ffffff;transform:scaleX(0.9006);transform-origin:1.00px 0;">Daniel Uchenna</div>
<div class="t" style="left:1176.50px;top:19px;font-size:17.15px;line-height:17.15px;color:#f3e3c0;transform:scaleX(0.8341);transform-origin:1.00px 0;">DU</div>
<div class="t" style="left:26.60px;top:67px;font-size:20.78px;line-height:20.78px;color:#444444;transform:scaleX(0.9119);transform-origin:1.00px 0;">File</div>
<div class="t" style="left:199.00px;top:67px;font-size:20.78px;line-height:20.78px;color:#444444;transform:scaleX(0.9303);transform-origin:1.00px 0;">Insert</div>
<div class="t" style="left:291.60px;top:67px;font-size:20.78px;line-height:20.78px;color:#444444;transform:scaleX(0.9064);transform-origin:1.00px 0;">Page Layout</div>
<div class="t" style="left:440.00px;top:67px;font-size:20.78px;line-height:20.78px;color:#444444;transform:scaleX(0.9430);transform-origin:1.00px 0;">Formulas</div>
<div class="t" style="left:561.30px;top:67px;font-size:20.78px;line-height:20.78px;color:#444444;transform:scaleX(0.9258);transform-origin:1.00px 0;">Data</div>
<div class="t" style="left:642.70px;top:67px;font-size:20.78px;line-height:20.78px;color:#444444;transform:scaleX(0.8709);transform-origin:1.00px 0;">Review</div>
<div class="t" style="left:745.00px;top:67px;font-size:20.78px;line-height:20.78px;color:#444444;transform:scaleX(0.9050);transform-origin:0.00px 0;">View</div>
<div class="t" style="left:827.40px;top:67px;font-size:20.78px;line-height:20.78px;color:#444444;transform:scaleX(0.9463);transform-origin:1.00px 0;">Developer</div>
<div class="t" style="left:959.30px;top:67px;font-size:20.78px;line-height:20.78px;color:#444444;transform:scaleX(0.9670);transform-origin:1.00px 0;">Help</div>
<div class="t" style="left:102.90px;top:67px;font-size:20.78px;line-height:20.78px;color:#323130;-webkit-text-stroke:0.6px currentColor;transform:scaleX(1.0141);transform-origin:1.00px 0;">Home</div>
<div class="t" style="left:1484.70px;top:65px;font-size:21.8px;line-height:21.8px;color:#1e7145;-webkit-text-stroke:0.75px currentColor;transform:scaleX(0.8494);transform-origin:0.00px 0;">Share</div>
<div class="t" style="left:26.50px;top:222px;font-size:15.84px;line-height:15.84px;color:#444444;">Clipboard</div>
<div class="t" style="left:279.80px;top:222px;font-size:15.84px;line-height:15.84px;color:#444444;transform:scaleX(0.9720);transform-origin:1.00px 0;">Font</div>
<div class="t" style="left:554.30px;top:222px;font-size:15.84px;line-height:15.84px;color:#444444;transform:scaleX(1.0143);transform-origin:0.00px 0;">Alignment</div>
<div class="t" style="left:765.00px;top:222px;font-size:15.84px;line-height:15.84px;color:#444444;transform:scaleX(1.0067);transform-origin:1.00px 0;">Number</div>
<div class="t" style="left:992.70px;top:222px;font-size:15.84px;line-height:15.84px;color:#444444;transform:scaleX(0.8961);transform-origin:0.00px 0;">Styles</div>
<div class="t" style="left:1198.80px;top:222px;font-size:15.84px;line-height:15.84px;color:#444444;transform:scaleX(0.8847);transform-origin:0.00px 0;">Cells</div>
<div class="t" style="left:1365.50px;top:222px;font-size:15.84px;line-height:15.84px;color:#444444;transform:scaleX(1.0087);transform-origin:1.00px 0;">Editing</div>
<div class="t" style="left:24.00px;top:162px;font-size:17.15px;line-height:17.15px;color:#a19f9d;transform:scaleX(0.9386);transform-origin:1.00px 0;">Paste</div>
<div class="t" style="left:159.50px;top:126px;font-size:18.9px;line-height:18.9px;color:#262626;transform:scaleX(0.9190);transform-origin:0.00px 0;">Calibri</div>
<div class="t" style="left:331.30px;top:126px;font-size:18.46px;line-height:18.46px;color:#262626;transform:scaleX(0.9100);transform-origin:0.00px 0;">9</div>
<div class="t" style="left:399.40px;top:116px;font-size:28.2px;line-height:28.2px;color:#323130;transform:scaleX(0.8895);transform-origin:0.00px 0;">A</div>
<div class="t" style="left:435.80px;top:122px;font-size:21.8px;line-height:21.8px;color:#323130;transform:scaleX(0.8667);transform-origin:0.00px 0;">A</div>
<div class="t" style="left:165.70px;top:170px;font-size:20.49px;line-height:20.49px;font-weight:700;color:#323130;transform:scaleX(0.8692);transform-origin:1.00px 0;">B</div>
<div class="t" style="left:201.70px;top:170px;font-size:20.49px;line-height:20.49px;font-style:italic;font-family:'Liberation Serif', serif;color:#323130;transform:scaleX(1.0778);transform-origin:-1.00px 0;">I</div>
<div class="t" style="left:231.50px;top:170px;font-size:20.49px;line-height:20.49px;color:#323130;">U</div>
<div class="t" style="left:415.00px;top:166px;font-size:23.98px;line-height:23.98px;color:#323130;transform:scaleX(0.8750);transform-origin:0.00px 0;">A</div>
<div class="t" style="left:748.60px;top:113px;font-size:19.77px;line-height:19.77px;color:#262626;transform:scaleX(0.8357);transform-origin:1.00px 0;">General</div>
<div class="t" style="left:755.70px;top:144px;font-size:27.03px;line-height:27.03px;color:#323130;transform:scaleX(0.7200);transform-origin:0.00px 0;">$</div>
<div class="t" style="left:805.80px;top:143px;font-size:29.94px;line-height:29.94px;color:#323130;transform:scaleX(0.8800);transform-origin:1.00px 0;">%</div>
<div class="t" style="left:761.00px;top:179px;font-size:13.66px;line-height:13.66px;color:#323130;transform:scaleX(0.9820);transform-origin:1.00px 0;">.0</div>
<div class="t" style="left:753.00px;top:193px;font-size:13.81px;line-height:13.81px;color:#323130;transform:scaleX(1.0051);transform-origin:1.00px 0;">.00</div>
<div class="t" style="left:787.00px;top:179px;font-size:13.66px;line-height:13.66px;color:#323130;transform:scaleX(1.0223);transform-origin:1.00px 0;">.00</div>
<div class="t" style="left:794.40px;top:193px;font-size:13.81px;line-height:13.81px;color:#323130;transform:scaleX(1.0523);transform-origin:1.00px 0;">.0</div>
<div class="t" style="left:924.40px;top:111px;font-size:18.6px;line-height:18.6px;color:#323130;transform:scaleX(0.9790);transform-origin:0.00px 0;">Conditional Formatting</div>
<div class="t" style="left:923.40px;top:145px;font-size:18.75px;line-height:18.75px;color:#323130;transform:scaleX(0.9278);transform-origin:1.00px 0;">Format as Table</div>
<div class="t" style="left:924.40px;top:178px;font-size:19.19px;line-height:19.19px;color:#323130;transform:scaleX(0.8541);transform-origin:0.00px 0;">Cell Styles</div>
<div class="t" style="left:1189.70px;top:111px;font-size:18.46px;line-height:18.46px;color:#323130;transform:scaleX(0.9558);transform-origin:1.00px 0;">Insert</div>
<div class="t" style="left:1189.70px;top:145px;font-size:18.31px;line-height:18.31px;color:#323130;transform:scaleX(0.9533);transform-origin:1.00px 0;">Delete</div>
<div class="t" style="left:1189.70px;top:179px;font-size:18.31px;line-height:18.31px;color:#323130;transform:scaleX(0.9901);transform-origin:1.00px 0;">Format</div>
<div class="t" style="left:1358.70px;top:161px;font-size:18.17px;line-height:18.17px;color:#323130;transform:scaleX(1.0170);transform-origin:0.00px 0;">Sort &amp;</div>
<div class="t" style="left:1356.00px;top:185px;font-size:18.17px;line-height:18.17px;color:#323130;transform:scaleX(0.9338);transform-origin:1.00px 0;">Filter</div>
<div class="t" style="left:1422.80px;top:161px;font-size:18.17px;line-height:18.17px;color:#323130;transform:scaleX(1.0085);transform-origin:1.00px 0;">Find &amp;</div>
<div class="t" style="left:1418.70px;top:185px;font-size:18.17px;line-height:18.17px;color:#323130;transform:scaleX(0.8886);transform-origin:0.00px 0;">Select</div>
<div class="t" style="left:15.70px;top:265px;font-size:20.06px;line-height:20.06px;color:#262626;transform:scaleX(0.9157);transform-origin:1.00px 0;">B1</div>
<div class="t" style="left:332.50px;top:262px;font-size:23.26px;line-height:23.26px;font-weight:700;font-style:italic;font-family:'Liberation Serif', serif;color:#6e6e6e;transform:scaleX(0.9371);transform-origin:0.00px 0;">fx</div>
<div class="t" style="left:390.40px;top:265px;font-size:20.2px;line-height:20.2px;color:#262626;transform:scaleX(0.9705);transform-origin:1.00px 0;">Gadgets</div>
<div class="t" style="left:133.55px;top:315px;font-size:33.72px;line-height:33.72px;color:#000000;transform:scaleX(0.8652);transform-origin:0.00px 0;">A</div>
<div class="t" style="left:306.50px;top:315px;font-size:33.72px;line-height:33.72px;color:#1e6b41;transform:scaleX(0.7368);transform-origin:2.00px 0;">B</div>
<div class="t" style="left:491.50px;top:315px;font-size:33.72px;line-height:33.72px;color:#000000;transform:scaleX(0.7826);transform-origin:1.00px 0;">C</div>
<div class="t" style="left:669.90px;top:315px;font-size:33.72px;line-height:33.72px;color:#000000;transform:scaleX(0.9619);transform-origin:2.00px 0;">D</div>
<div class="t" style="left:860.30px;top:315px;font-size:33.72px;line-height:33.72px;color:#000000;transform:scaleX(0.6700);transform-origin:2.00px 0;">E</div>
<div class="t" style="left:1043.20px;top:315px;font-size:33.72px;line-height:33.72px;color:#000000;transform:scaleX(0.7000);transform-origin:2.00px 0;">F</div>
<div class="t" style="left:1202.20px;top:315px;font-size:33.72px;line-height:33.72px;color:#000000;transform:scaleX(0.8957);transform-origin:1.00px 0;">G</div>
<div class="t" style="left:1355.60px;top:315px;font-size:33.72px;line-height:33.72px;color:#000000;transform:scaleX(0.9900);transform-origin:2.00px 0;">H</div>
<div class="t" style="left:1517.30px;top:315px;font-size:33.72px;line-height:33.72px;color:#000000;transform:scaleX(0.8500);transform-origin:3.00px 0;">I</div>
<div class="t" style="left:27.50px;top:359px;font-size:33.43px;line-height:33.43px;color:#1e6b41;transform:scaleX(0.6667);transform-origin:2.00px 0;">1</div>
<div class="t" style="left:26.40px;top:405px;font-size:33.43px;line-height:33.43px;color:#000000;transform:scaleX(0.8875);transform-origin:1.00px 0;">2</div>
<div class="t" style="left:26.50px;top:451px;font-size:33.43px;line-height:33.43px;color:#000000;transform:scaleX(0.8235);transform-origin:1.00px 0;">3</div>
<div class="t" style="left:26.75px;top:497px;font-size:33.43px;line-height:33.43px;color:#000000;transform:scaleX(0.8611);transform-origin:0.00px 0;">4</div>
<div class="t" style="left:26.75px;top:543px;font-size:33.43px;line-height:33.43px;color:#000000;transform:scaleX(0.7941);transform-origin:1.00px 0;">5</div>
<div class="t" style="left:26.25px;top:589px;font-size:33.43px;line-height:33.43px;color:#000000;transform:scaleX(0.8529);transform-origin:1.00px 0;">6</div>
<div class="t" style="left:26.00px;top:635px;font-size:33.43px;line-height:33.43px;color:#000000;transform:scaleX(0.9375);transform-origin:1.00px 0;">7</div>
<div class="t" style="left:26.25px;top:681px;font-size:33.43px;line-height:33.43px;color:#000000;transform:scaleX(0.8529);transform-origin:1.00px 0;">8</div>
<div class="t" style="left:26.25px;top:727px;font-size:33.43px;line-height:33.43px;color:#000000;transform:scaleX(0.9062);transform-origin:1.00px 0;">9</div>
<div class="t" style="left:17.00px;top:773px;font-size:33.43px;line-height:33.43px;color:#000000;transform:scaleX(0.8963);transform-origin:2.00px 0;">10</div>
<div class="t" style="left:18.50px;top:819px;font-size:33.43px;line-height:33.43px;color:#000000;transform:scaleX(0.9001);transform-origin:2.00px 0;">11</div>
<div class="t" style="left:17.40px;top:865px;font-size:33.43px;line-height:33.43px;color:#000000;transform:scaleX(0.8991);transform-origin:2.00px 0;">12</div>
<div class="t" style="left:17.40px;top:911px;font-size:33.43px;line-height:33.43px;color:#000000;transform:scaleX(0.8731);transform-origin:2.00px 0;">13</div>
<div class="t" style="left:116.70px;top:359px;font-size:32.99px;line-height:32.99px;font-weight:700;color:#000000;">S/N</div>
<div class="t" style="left:265.60px;top:363px;font-size:25.29px;line-height:25.29px;font-weight:700;color:#000000;transform:scaleX(0.9791);transform-origin:1.00px 0;">Gadgets</div>
<div class="t" style="left:471.75px;top:363px;font-size:25.0px;line-height:25.0px;font-weight:700;color:#000000;transform:scaleX(0.9510);transform-origin:1.00px 0;">Price</div>
<div class="t" style="left:628.40px;top:363px;font-size:25.0px;line-height:25.0px;font-weight:700;color:#000000;transform:scaleX(1.0549);transform-origin:1.00px 0;">Quantity</div>
<div class="t" style="left:841.00px;top:363px;font-size:25.0px;line-height:25.0px;font-weight:700;color:#000000;transform:scaleX(1.0191);transform-origin:0.00px 0;">Total</div>
<div class="t" style="left:135.35px;top:406px;font-size:32.56px;line-height:32.56px;font-weight:700;color:#000000;transform:scaleX(0.8562);transform-origin:2.00px 0;">1</div>
<div class="t" style="left:279.20px;top:414px;font-size:23.55px;line-height:23.55px;color:#000000;transform:scaleX(1.0095);transform-origin:1.00px 0;">Laptop</div>
<div class="t" style="left:459.90px;top:414px;font-size:23.26px;line-height:23.26px;color:#000000;transform:scaleX(0.9890);transform-origin:1.00px 0;">270,000</div>
<div class="t" style="left:675.45px;top:414px;font-size:23.26px;line-height:23.26px;color:#000000;transform:scaleX(1.1000);transform-origin:1.00px 0;">6</div>
<div class="t" style="left:824.25px;top:412px;font-size:23.4px;line-height:23.4px;color:#000000;transform:scaleX(0.9894);transform-origin:1.00px 0;">1620000</div>
<div class="t" style="left:135.45px;top:452px;font-size:32.56px;line-height:32.56px;font-weight:700;color:#000000;transform:scaleX(0.9688);transform-origin:1.00px 0;">2</div>
<div class="t" style="left:273.10px;top:460px;font-size:23.55px;line-height:23.55px;color:#000000;transform:scaleX(0.9648);transform-origin:1.00px 0;">Speaker</div>
<div class="t" style="left:466.75px;top:460px;font-size:23.26px;line-height:23.26px;color:#000000;transform:scaleX(0.9760);transform-origin:1.00px 0;">17,450</div>
<div class="t" style="left:675.25px;top:460px;font-size:23.26px;line-height:23.26px;color:#000000;transform:scaleX(1.1364);transform-origin:1.00px 0;">9</div>
<div class="t" style="left:830.65px;top:458px;font-size:23.4px;line-height:23.4px;color:#000000;transform:scaleX(0.9903);transform-origin:1.00px 0;">157050</div>
<div class="t" style="left:136.70px;top:498px;font-size:32.56px;line-height:32.56px;font-weight:700;color:#000000;transform:scaleX(0.8824);transform-origin:0.00px 0;">3</div>
<div class="t" style="left:279.60px;top:506px;font-size:23.55px;line-height:23.55px;color:#000000;transform:scaleX(1.0175);transform-origin:1.00px 0;">Mouse</div>
<div class="t" style="left:473.80px;top:506px;font-size:23.26px;line-height:23.26px;color:#000000;transform:scaleX(0.9682);transform-origin:0.00px 0;">4,500</div>
<div class="t" style="left:669.00px;top:506px;font-size:23.26px;line-height:23.26px;color:#000000;transform:scaleX(1.0447);transform-origin:1.00px 0;">12</div>
<div class="t" style="left:837.95px;top:504px;font-size:23.4px;line-height:23.4px;color:#000000;transform:scaleX(0.9795);transform-origin:0.00px 0;">54000</div>
<div class="t" style="left:135.70px;top:544px;font-size:32.56px;line-height:32.56px;font-weight:700;color:#000000;transform:scaleX(0.9444);transform-origin:0.00px 0;">4</div>
<div class="t" style="left:250.60px;top:552px;font-size:23.55px;line-height:23.55px;color:#000000;transform:scaleX(1.0563);transform-origin:1.00px 0;">Microphone</div>
<div class="t" style="left:466.50px;top:552px;font-size:23.26px;line-height:23.26px;color:#000000;transform:scaleX(0.9832);transform-origin:1.00px 0;">25,000</div>
<div class="t" style="left:675.25px;top:552px;font-size:23.26px;line-height:23.26px;color:#000000;transform:scaleX(1.1364);transform-origin:1.00px 0;">9</div>
<div class="t" style="left:831.10px;top:550px;font-size:23.4px;line-height:23.4px;color:#000000;transform:scaleX(0.9787);transform-origin:1.00px 0;">225000</div>
<div class="t" style="left:135.70px;top:590px;font-size:32.56px;line-height:32.56px;font-weight:700;color:#000000;transform:scaleX(0.8824);transform-origin:1.00px 0;">5</div>
<div class="t" style="left:261.45px;top:598px;font-size:23.55px;line-height:23.55px;color:#000000;transform:scaleX(1.0238);transform-origin:2.00px 0;">Iphone 13</div>
<div class="t" style="left:460.85px;top:598px;font-size:23.26px;line-height:23.26px;color:#000000;transform:scaleX(0.9785);transform-origin:0.00px 0;">300,000</div>
<div class="t" style="left:675.45px;top:598px;font-size:23.26px;line-height:23.26px;color:#000000;transform:scaleX(1.1000);transform-origin:1.00px 0;">6</div>
<div class="t" style="left:824.25px;top:596px;font-size:23.4px;line-height:23.4px;color:#000000;transform:scaleX(0.9894);transform-origin:1.00px 0;">1800000</div>
<div class="t" style="left:135.00px;top:636px;font-size:32.56px;line-height:32.56px;font-weight:700;color:#000000;transform:scaleX(1.0250);transform-origin:1.00px 0;">6</div>
<div class="t" style="left:280.85px;top:644px;font-size:23.55px;line-height:23.55px;color:#000000;transform:scaleX(1.0497);transform-origin:0.00px 0;">Airpod</div>
<div class="t" style="left:466.75px;top:644px;font-size:23.26px;line-height:23.26px;color:#000000;transform:scaleX(0.9760);transform-origin:1.00px 0;">15,000</div>
<div class="t" style="left:676.25px;top:644px;font-size:23.26px;line-height:23.26px;color:#000000;transform:scaleX(0.9545);transform-origin:1.00px 0;">1</div>
<div class="t" style="left:836.95px;top:642px;font-size:23.4px;line-height:23.4px;color:#000000;transform:scaleX(0.9948);transform-origin:1.00px 0;">15000</div>
<div class="t" style="left:135.70px;top:682px;font-size:32.56px;line-height:32.56px;font-weight:700;color:#000000;transform:scaleX(0.9375);transform-origin:1.00px 0;">7</div>
<div class="t" style="left:272.85px;top:690px;font-size:23.55px;line-height:23.55px;color:#000000;transform:scaleX(0.9672);transform-origin:1.00px 0;">Headset</div>
<div class="t" style="left:473.80px;top:690px;font-size:23.26px;line-height:23.26px;color:#000000;transform:scaleX(0.9682);transform-origin:0.00px 0;">3,500</div>
<div class="t" style="left:676.00px;top:690px;font-size:23.26px;line-height:23.26px;color:#000000;">4</div>
<div class="t" style="left:836.95px;top:688px;font-size:23.4px;line-height:23.4px;color:#000000;transform:scaleX(0.9948);transform-origin:1.00px 0;">14000</div>
<div class="t" style="left:135.20px;top:728px;font-size:32.56px;line-height:32.56px;font-weight:700;color:#000000;transform:scaleX(0.9412);transform-origin:1.00px 0;">8</div>
<div class="t" style="left:269.95px;top:736px;font-size:23.55px;line-height:23.55px;color:#000000;transform:scaleX(1.0632);transform-origin:1.00px 0;">Moderm</div>
<div class="t" style="left:466.75px;top:736px;font-size:23.26px;line-height:23.26px;color:#000000;transform:scaleX(0.9760);transform-origin:1.00px 0;">17,500</div>
<div class="t" style="left:675.45px;top:736px;font-size:23.26px;line-height:23.26px;color:#000000;transform:scaleX(1.1000);transform-origin:1.00px 0;">6</div>
<div class="t" style="left:830.65px;top:734px;font-size:23.4px;line-height:23.4px;color:#000000;transform:scaleX(0.9903);transform-origin:1.00px 0;">105000</div>
<div class="t" style="left:135.20px;top:774px;font-size:32.56px;line-height:32.56px;font-weight:700;color:#000000;">9</div>
<div class="t" style="left:242.50px;top:782px;font-size:23.55px;line-height:23.55px;color:#000000;transform:scaleX(0.9837);transform-origin:0.00px 0;">Tecno Spark 2</div>
<div class="t" style="left:467.50px;top:782px;font-size:23.26px;line-height:23.26px;color:#000000;transform:scaleX(0.9693);transform-origin:0.00px 0;">35,000</div>
<div class="t" style="left:676.25px;top:782px;font-size:23.26px;line-height:23.26px;color:#000000;transform:scaleX(0.9545);transform-origin:1.00px 0;">1</div>
<div class="t" style="left:837.95px;top:780px;font-size:23.4px;line-height:23.4px;color:#000000;transform:scaleX(0.9795);transform-origin:0.00px 0;">35000</div>
<div class="t" style="left:131.60px;top:956px;font-size:20.06px;line-height:20.06px;font-weight:700;color:#1e7145;transform:scaleX(0.9653);transform-origin:1.00px 0;">Purchase Report</div>
<div class="t" style="left:11.20px;top:994px;font-size:17.3px;line-height:17.3px;color:#444444;transform:scaleX(0.8537);transform-origin:1.00px 0;">Ready</div>
<div class="t" style="left:157.60px;top:994px;font-size:17.3px;line-height:17.3px;color:#444444;transform:scaleX(0.8857);transform-origin:0.00px 0;">Accessibility: Unavailable</div>
<div class="t" style="left:1499.30px;top:995px;font-size:16.86px;line-height:16.86px;color:#444444;transform:scaleX(0.9044);transform-origin:1.00px 0;">160%</div>
<div class="t" style="left:1149.50px;top:629px;font-size:29.07px;line-height:29.07px;font-weight:700;color:#000000;transform:scaleX(1.0505);transform-origin:1.00px 0;">File Name</div>
<div class="r" style="left:266.3px;top:1px;width:186px;height:50px;box-sizing:border-box;border:5px solid #000;border-radius:6px;"></div>
<svg class="r" style="left:0;top:0" width="1569" height="1020" viewBox="0 0 1569 1020">
<path d="M468.5,65.8 L1147.6,626.7" stroke="#000" stroke-width="5" fill="none"/>
<path d="M450,50 L478,60.5 L470,64 L466.8,68 L465.3,74.7 Z" fill="#000"/>
</svg>
</body></html>
